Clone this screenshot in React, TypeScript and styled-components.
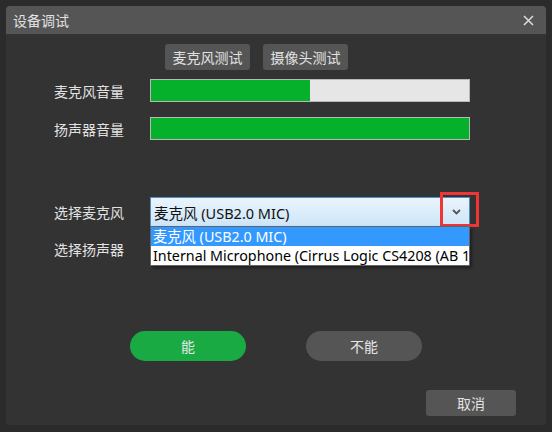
import React from "react";
import styled, { createGlobalStyle } from "styled-components";

const Global = createGlobalStyle`
  html, body { margin: 0; padding: 0; background: #2b2b2b; }
  body { font-family: "Noto Sans CJK SC", "Noto Sans", sans-serif; }
  * { box-sizing: border-box; }
`;

const Dialog = styled.div`
  margin: 6px;
  width: 540px;
  height: 419px;
  background: #333333;
  border-radius: 4px;
  overflow: hidden;
  display: flex;
  flex-direction: column;
  position: relative;
`;

const TitleBar = styled.div`
  height: 28px;
  background: #555555;
  display: flex;
  align-items: center;
  justify-content: space-between;
  padding: 0 12px 0 7px;
  color: #e2e2e2;
  font-size: 14px;
`;

const Close = styled.svg`
  width: 11px;
  height: 11px;
  display: block;
`;

const Body = styled.div`
  flex: 1;
  display: flex;
  flex-direction: column;
  padding: 10px 0 0 48px;
  position: relative;
`;

const Tabs = styled.div`
  display: flex;
  gap: 13px;
  padding-left: 111px;
`;

const Tab = styled.button`
  width: 85px;
  height: 26px;
  border: none;
  border-radius: 3px;
  background: #555555;
  color: #e2e2e2;
  font-family: inherit;
  font-size: 14px;
  padding: 0;
`;

const Row = styled.div<{ $top: number }>`
  display: grid;
  grid-template-columns: 96px 320px;
  align-items: center;
  margin-top: ${(p) => p.$top}px;
  position: relative;
`;

const Label = styled.div`
  color: #e2e2e2;
  font-size: 14px;
  line-height: 20px;
`;

const Bar = styled.div`
  height: 23px;
  border: 1px solid #b8b8b8;
  background: #e6e6e6;
  display: flex;
`;

const Fill = styled.div`
  height: 100%;
  background: #05b02a;
`;

const Select = styled.div`
  height: 30px;
  border: 1px solid #4f8ecb;
  background: linear-gradient(#eaf4fc, #cde5f8);
  display: flex;
  align-items: center;
  justify-content: space-between;
  padding: 0 7px 0 3px;
  color: #111;
  font-size: 14.5px;
  font-family: "Noto Sans", "Noto Sans CJK SC", sans-serif;
`;

const Chevron = styled.svg`
  width: 9px;
  height: 6px;
  display: block;
  margin-right: 1px;
`;

const Highlight = styled.div`
  position: absolute;
  left: 386px;
  top: -5px;
  width: 39px;
  height: 35px;
  border: 3px solid #ee3636;
  pointer-events: none;
`;

const List = styled.div`
  position: absolute;
  left: 96px;
  top: 29px;
  width: 320px;
  background: #ffffff;
  border: 1px solid #646464;
  box-shadow: 2px 2px 3px rgba(0, 0, 0, 0.4);
  overflow: hidden;
  z-index: 2;
  font-family: "Noto Sans", "Noto Sans CJK SC", sans-serif;
  font-size: 14.3px;
`;

const Item = styled.div<{ $active?: boolean }>`
  height: 19px;
  line-height: 19px;
  padding-left: 2px;
  white-space: nowrap;
  overflow: hidden;
  background: ${(p) => (p.$active ? "#3399ff" : "#ffffff")};
  color: ${(p) => (p.$active ? "#ffffff" : "#000000")};
`;

const Choices = styled.div`
  display: flex;
  gap: 60px;
  margin-top: 67px;
  padding-left: 76px;
`;

const Pill = styled.button<{ $primary?: boolean }>`
  width: 116px;
  height: 30px;
  border: none;
  border-radius: 15px;
  background: ${(p) => (p.$primary ? "#1aaa44" : "#555555")};
  color: #e6e6e6;
  font-family: inherit;
  font-size: 14px;
  padding: 0;
`;

const Footer = styled.div`
  display: flex;
  justify-content: flex-end;
  padding-right: 30px;
  margin-top: 29px;
`;

const Cancel = styled.button`
  width: 90px;
  height: 26px;
  border: none;
  border-radius: 3px;
  background: #555555;
  color: #e2e2e2;
  font-family: inherit;
  font-size: 14px;
  padding: 0;
`;

export default function App() {
  const micLevel = 50;
  const speakerLevel = 100;
  return (
    <>
      <Global />
      <Dialog>
        <TitleBar>
          <span>设备调试</span>
          <Close viewBox="0 0 11 11">
            <path d="M1 1L10 10M10 1L1 10" stroke="#dcdcdc" strokeWidth="1.5" />
          </Close>
        </TitleBar>
        <Body>
          <Tabs>
            <Tab>麦克风测试</Tab>
            <Tab>摄像头测试</Tab>
          </Tabs>
          <Row $top={9}>
            <Label>麦克风音量</Label>
            <Bar>
              <Fill style={{ width: `${micLevel}%` }} />
            </Bar>
          </Row>
          <Row $top={15}>
            <Label>扬声器音量</Label>
            <Bar>
              <Fill style={{ width: `${speakerLevel}%` }} />
            </Bar>
          </Row>
          <Row $top={57}>
            <Label>选择麦克风</Label>
            <Select>
              <span>麦克风 (USB2.0 MIC)</span>
              <Chevron viewBox="0 0 9 6">
                <path d="M1 1L4.5 4.5L8 1" stroke="#555" strokeWidth="1.8" fill="none" />
              </Chevron>
            </Select>
            <Highlight />
            <List>
              <Item $active>麦克风 (USB2.0 MIC)</Item>
              <Item>Internal Microphone (Cirrus Logic CS4208 (AB 1</Item>
            </List>
          </Row>
          <Row $top={7}>
            <Label>选择扬声器</Label>
            <Select />
          </Row>
          <Choices>
            <Pill $primary>能</Pill>
            <Pill>不能</Pill>
          </Choices>
          <Footer>
            <Cancel>取消</Cancel>
          </Footer>
        </Body>
      </Dialog>
    </>
  );
}
